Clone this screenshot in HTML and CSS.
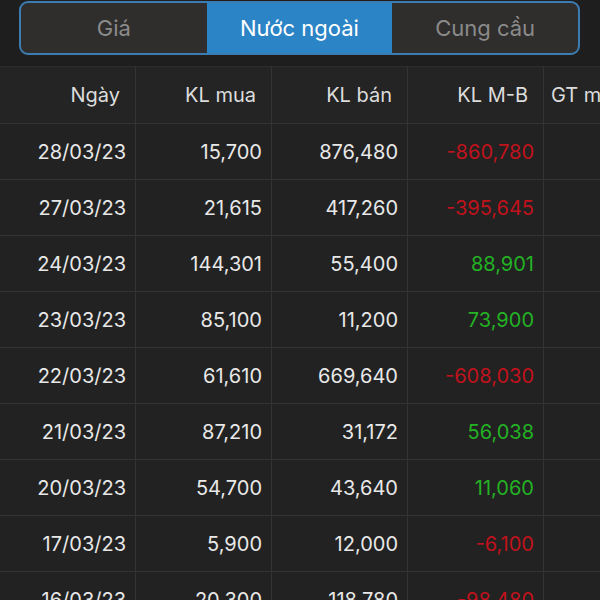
FILE: index.html
```html
<!DOCTYPE html>
<html lang="vi">
<head>
    <meta charset="UTF-8">
    <title>Nước ngoài</title>
    <link rel="stylesheet" href="styles.css">
</head>
<body>
<div class="tabs">
    <div class="tab">Giá</div>
    <div class="tab active">Nước ngoài</div>
    <div class="tab">Cung cầu</div>
</div>

<div class="table">
    <div class="row head">
        <div class="cell">Ngày</div>
        <div class="cell">KL mua</div>
        <div class="cell">KL bán</div>
        <div class="cell">KL M-B</div>
        <div class="cell left">GT mua</div>
    </div>
    <div class="row">
        <div class="cell">28/03/23</div>
        <div class="cell">15,700</div>
        <div class="cell">876,480</div>
        <div class="cell down">-860,780</div>
        <div class="cell"></div>
    </div>
    <div class="row">
        <div class="cell">27/03/23</div>
        <div class="cell">21,615</div>
        <div class="cell">417,260</div>
        <div class="cell down">-395,645</div>
        <div class="cell"></div>
    </div>
    <div class="row">
        <div class="cell">24/03/23</div>
        <div class="cell">144,301</div>
        <div class="cell">55,400</div>
        <div class="cell up">88,901</div>
        <div class="cell"></div>
    </div>
    <div class="row">
        <div class="cell">23/03/23</div>
        <div class="cell">85,100</div>
        <div class="cell">11,200</div>
        <div class="cell up">73,900</div>
        <div class="cell"></div>
    </div>
    <div class="row">
        <div class="cell">22/03/23</div>
        <div class="cell">61,610</div>
        <div class="cell">669,640</div>
        <div class="cell down">-608,030</div>
        <div class="cell"></div>
    </div>
    <div class="row">
        <div class="cell">21/03/23</div>
        <div class="cell">87,210</div>
        <div class="cell">31,172</div>
        <div class="cell up">56,038</div>
        <div class="cell"></div>
    </div>
    <div class="row">
        <div class="cell">20/03/23</div>
        <div class="cell">54,700</div>
        <div class="cell">43,640</div>
        <div class="cell up">11,060</div>
        <div class="cell"></div>
    </div>
    <div class="row">
        <div class="cell">17/03/23</div>
        <div class="cell">5,900</div>
        <div class="cell">12,000</div>
        <div class="cell down">-6,100</div>
        <div class="cell"></div>
    </div>
    <div class="row">
        <div class="cell">16/03/23</div>
        <div class="cell">20,300</div>
        <div class="cell">118,780</div>
        <div class="cell down">-98,480</div>
        <div class="cell"></div>
    </div>
</div>
</body>
</html>
```

FILE: styles.css
```css
* {
    box-sizing: border-box;
}

body {
    margin: 0;
    background-color: #1e1e1e;
    color: #e8e8e8;
    font-family: Inter, "Noto Sans", sans-serif;
    font-size: 20px;
    overflow: hidden;
    height: 600px;
}

.tabs {
    display: grid;
    grid-template-columns: 1fr 1fr 1fr;
    height: 54px;
    margin: 1px 20px 0 19px;
    border: 2px solid #3b7db3;
    border-radius: 9px;
    background-color: #2f2e2d;
    overflow: hidden;
    font-size: 22px;
}

.tab {
    display: flex;
    align-items: center;
    justify-content: center;
    padding-bottom: 1px;
    color: #8b8b8b;
}

.tab.active {
    background-color: #2a84c6;
    color: #ffffff;
}

.table {
    margin-top: 11px;
    width: 680px;
}

.row {
    display: grid;
    grid-template-columns: repeat(5, 136px);
    height: 56px;
    border-bottom: 1px solid #333333;
    background-color: #222222;
}

.row.head {
    height: 58px;
    border-top: 1px solid #2c2c2c;
    background-color: #242424;
    color: #dcdcdc;
}

.cell {
    display: flex;
    align-items: center;
    justify-content: flex-end;
    padding-right: 9px;
    border-right: 1px solid #333333;
}

.head .cell {
    padding-right: 15px;
}

.head .cell.left {
    justify-content: flex-start;
    padding-left: 7px;
}

.down {
    color: #c0121c;
}

.up {
    color: #22b224;
}
```
